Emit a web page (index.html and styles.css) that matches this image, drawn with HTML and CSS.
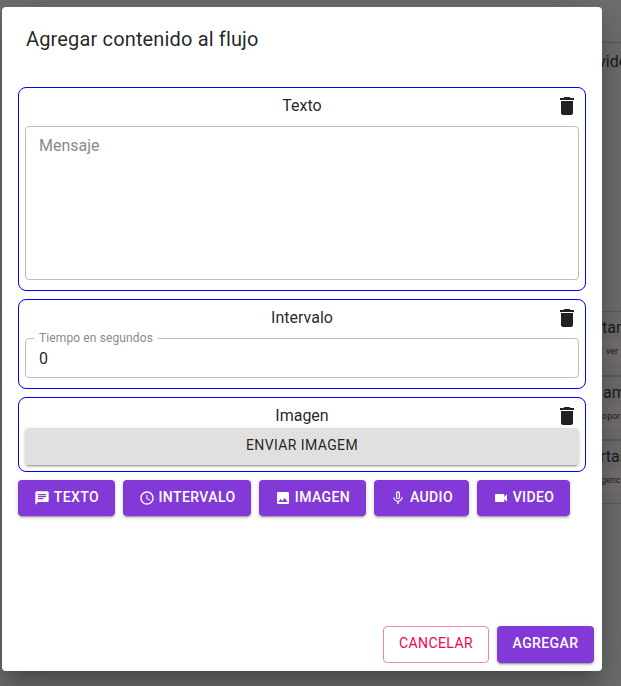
FILE: index.html
```html
<!DOCTYPE html>
<html lang="es">
<head>
<meta charset="utf-8">
<title>Agregar contenido al flujo</title>
<link rel="stylesheet" href="styles.css">
</head>
<body>
<div class="backdrop-content" aria-hidden="true">
  <div class="bg-line bl1"></div>
  <span class="bg-text bt1">vide</span>
  <div class="bg-line bl2"></div>
  <span class="bg-text bt2">tam</span>
  <span class="bg-chip bc2">ver</span>
  <div class="bg-line bl3"></div>
  <span class="bg-text bt3">ame</span>
  <span class="bg-chip bc3">opor</span>
  <div class="bg-line bl4"></div>
  <span class="bg-text bt4">rtan</span>
  <span class="bg-chip bc4">genc</span>
  <div class="bg-line bl5"></div>
</div>
<div class="dialog">
  <h2 class="title">Agregar contenido al flujo</h2>
  <div class="content">
    <section class="card card-text">
      <div class="card-head">
        <span class="card-title">Texto</span>
        <svg class="trash" viewBox="0 0 24 24"><path d="M6 19c0 1.1.9 2 2 2h8c1.1 0 2-.9 2-2V7H6v12zM19 4h-3.500l-1-1h-5l-1 1H5v2h14V4z"/></svg>
      </div>
      <div class="textarea"><span class="placeholder">Mensaje</span></div>
    </section>
    <section class="card card-interval">
      <div class="card-head">
        <span class="card-title">Intervalo</span>
        <svg class="trash" viewBox="0 0 24 24"><path d="M6 19c0 1.1.9 2 2 2h8c1.1 0 2-.9 2-2V7H6v12zM19 4h-3.500l-1-1h-5l-1 1H5v2h14V4z"/></svg>
      </div>
      <div class="field">
        <span class="field-label">Tiempo en segundos</span>
        <span class="field-value">0</span>
      </div>
    </section>
    <section class="card card-image">
      <div class="card-head">
        <span class="card-title">Imagen</span>
        <svg class="trash" viewBox="0 0 24 24"><path d="M6 19c0 1.1.9 2 2 2h8c1.1 0 2-.9 2-2V7H6v12zM19 4h-3.500l-1-1h-5l-1 1H5v2h14V4z"/></svg>
      </div>
      <button class="btn-grey">ENVIAR IMAGEM</button>
    </section>
    <div class="toolbar">
      <button class="btn btn-primary w-texto"><svg class="ico" viewBox="0 0 24 24"><path d="M20 2H4c-1.100 0-1.990.9-1.990 2L2 22l4-4h14c1.100 0 2-.9 2-2V4c0-1.100-.9-2-2-2zM6 9h12v2H6V9zm8 5H6v-2h8v2zm4-6H6V6h12v2z"/></svg>TEXTO</button>
      <button class="btn btn-primary w-intervalo"><svg class="ico" viewBox="0 0 24 24"><path d="M11.990 2C6.470 2 2 6.480 2 12s4.470 10 9.990 10C17.520 22 22 17.520 22 12S17.520 2 11.990 2zM12 20c-4.420 0-8-3.580-8-8s3.580-8 8-8 8 3.580 8 8-3.580 8-8 8zm.5-13H11v6l5.250 3.150.75-1.230-4.500-2.670z"/></svg>INTERVALO</button>
      <button class="btn btn-primary w-imagen"><svg class="ico" viewBox="0 0 24 24"><path d="M21 19V5c0-1.100-.9-2-2-2H5c-1.100 0-2 .9-2 2v14c0 1.100.9 2 2 2h14c1.100 0 2-.9 2-2zM8.500 13.500l2.500 3.010L14.500 12l4.500 6H5l3.500-4.500z"/></svg>IMAGEN</button>
      <button class="btn btn-primary w-audio"><svg class="ico" viewBox="0 0 24 24"><path d="M12 14c1.660 0 2.990-1.340 2.990-3L15 5c0-1.660-1.340-3-3-3S9 3.340 9 5v6c0 1.660 1.340 3 3 3zm-1.200-9.100c0-.66.54-1.200 1.200-1.200s1.200.54 1.200 1.200l-.01 6.200c0 .66-.53 1.200-1.190 1.200s-1.200-.54-1.200-1.200V4.900zm6.500 6.100c0 3-2.540 5.100-5.300 5.100S6.700 14 6.700 11H5c0 3.410 2.720 6.230 6 6.720V21h2v-3.280c3.280-.48 6-3.300 6-6.720h-1.700z"/></svg>AUDIO</button>
      <button class="btn btn-primary w-video"><svg class="ico" viewBox="0 0 24 24"><path d="M17 10.500V7c0-.55-.45-1-1-1H4c-.55 0-1 .45-1 1v10c0 .55.45 1 1 1h12c.55 0 1-.45 1-1v-3.500l4 4v-11l-4 4z"/></svg>VIDEO</button>
    </div>
  </div>
  <div class="actions">
    <button class="btn btn-outline">CANCELAR</button>
    <button class="btn btn-primary w-agregar">AGREGAR</button>
  </div>
</div>
</body>
</html>
```

FILE: styles.css
```css
* { box-sizing: border-box; }
html, body { margin: 0; height: 100%; }
body {
  width: 621px;
  height: 686px;
  overflow: hidden;
  position: relative;
  background: #6f6f6f;
  font-family: Roboto, "Liberation Sans", sans-serif;
  color: rgba(0,0,0,.87);
}

/* page dimmed behind the modal */
.backdrop-content { position: absolute; inset: 0; overflow: hidden; color: #1c1c1c; }
.bg-line { position: absolute; left: 0; right: 0; height: 1px; background: #5d5d5d; }
.bl1 { top: 42px; }
.bl2 { top: 311px; }
.bl3 { top: 375px; height: 2px; }
.bl4 { top: 439px; height: 2px; }
.bl5 { top: 503px; }
.bg-text { position: absolute; font-size: 16px; line-height: 20px; }
.bg-chip {
  position: absolute;
  left: 590px;
  width: 40px;
  height: 25px;
  padding-left: 16px;
  font-size: 9px;
  line-height: 25px;
  color: #222;
  background: #767170;
}
.bt1 { left: 598px; top: 52px; }
.bt2 { left: 602px; top: 318px; }
.bt3 { left: 603px; top: 383px; }
.bt4 { left: 600px; top: 447px; }
.bc2 { top: 339px; }
.bc3 { top: 404px; padding-left: 12px; }
.bc4 { top: 468px; padding-left: 11px; }

.dialog {
  position: absolute;
  left: 2px;
  top: 7px;
  width: 600px;
  height: 664px;
  background: #fff;
  border-radius: 4px;
  display: flex;
  flex-direction: column;
  box-shadow: 0 11px 15px -7px rgba(0,0,0,.2), 0 24px 38px 3px rgba(0,0,0,.14), 0 9px 46px 8px rgba(0,0,0,.12);
}
.title {
  margin: 0;
  padding: 16px 24px;
  font-size: 20px;
  font-weight: 400;
  line-height: 32px;
  letter-spacing: .15px;
}
.content {
  flex: 1;
  padding: 16px 16px 0;
  display: flex;
  flex-direction: column;
  gap: 8px;
}
.card {
  border: 1px solid #0000ff;
  border-radius: 8px;
  padding: 0 6px;
}
.card-text { height: 204px; }
.card-interval { height: 90px; }
.card-image { height: 75px; }
.card-head {
  position: relative;
  height: 38px;
  display: flex;
  justify-content: center;
  align-items: center;
}
.card-image .card-head { height: 30px; }
.card-title { font-size: 16px; line-height: 24px; margin-top: -3px; }
.card-image .card-title { margin-top: 5px; }
.trash {
  position: absolute;
  right: 0;
  top: 6px;
  width: 24px;
  height: 24px;
  fill: #212121;
}
.textarea {
  height: 154px;
  border: 1px solid #bdbdbd;
  border-radius: 4px;
  padding: 9px 13px;
}
.placeholder { font-size: 16px; line-height: 19px; color: #8a8a8a; }
.field {
  position: relative;
  height: 40px;
  border: 1px solid #bdbdbd;
  border-radius: 4px;
  padding: 9px 13px;
  font-size: 16px;
  line-height: 21px;
}
.field-label {
  position: absolute;
  left: 8px;
  top: -8px;
  padding: 0 5px;
  background: #fff;
  font-size: 12px;
  line-height: 14px;
  letter-spacing: .12px;
  color: #8a8a8a;
}
.btn-grey {
  display: block;
  width: 100%;
  height: 37px;
  border: 0;
  border-radius: 4px;
  padding: 0 0 3px;
  background: #e0e0e0;
  color: rgba(0,0,0,.87);
  font: 400 14px/1 Roboto, sans-serif;
  letter-spacing: .4px;
  box-shadow: 0 3px 1px -2px rgba(0,0,0,.2), 0 2px 2px 0 rgba(0,0,0,.14), 0 1px 5px 0 rgba(0,0,0,.12);
}
.toolbar { display: flex; gap: 8px; }
.btn {
  height: 36px;
  border-radius: 4px;
  border: 0;
  font: 500 14px/1 Roboto, sans-serif;
  letter-spacing: .4px;
  display: flex;
  align-items: center;
  justify-content: center;
  padding: 0 0 2px;
}
.btn-primary {
  background: #8339d8;
  color: #fff;
  box-shadow: 0 3px 1px -2px rgba(0,0,0,.2), 0 2px 2px 0 rgba(0,0,0,.14), 0 1px 5px 0 rgba(0,0,0,.12);
}
.ico { width: 16px; height: 16px; fill: #fff; margin: 2px 4px 0 0; flex: none; }
.w-texto { width: 97px; }
.w-intervalo { width: 128px; }
.w-imagen { width: 107px; }
.w-audio { width: 95px; }
.w-video { width: 93px; }
.actions {
  display: flex;
  justify-content: flex-end;
  gap: 8px;
  padding: 0 8px 8px;
}
.actions .btn { height: 37px; padding-bottom: 3px; }
.btn-outline {
  width: 106px;
  background: #fff;
  border: 1px solid #f783a6;
  color: #f50057;
  font-weight: 400;
}
.w-agregar { width: 97px; }
```
